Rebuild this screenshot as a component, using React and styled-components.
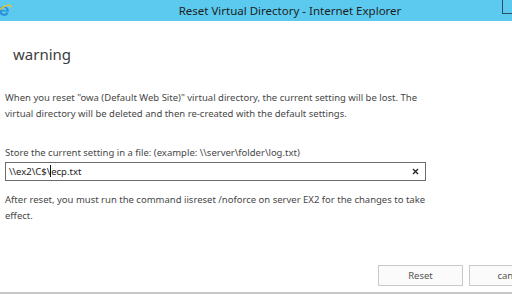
import React from 'react';
import styled, { createGlobalStyle } from 'styled-components';

const GlobalStyle = createGlobalStyle`
  html, body {
    margin: 0;
    padding: 0;
    background: #ffffff;
    overflow: hidden;
  }
`;

const Window = styled.div`
  width: 580px;
  height: 294px;
  display: flex;
  flex-direction: column;
  background: #ffffff;
  font-family: 'Noto Sans', 'Open Sans', sans-serif;
  color: #454545;
  box-sizing: border-box;
  border-bottom: 2px solid #c6c6c6;
`;

const TitleBar = styled.div`
  height: 21px;
  display: flex;
  align-items: center;
  background: #5ccaee;
  flex-shrink: 0;
`;

const AppIcon = styled.svg`
  width: 16px;
  height: 16px;
  margin-left: -4px;
  flex-shrink: 0;
`;

const TitleText = styled.div`
  flex: 1;
  text-align: center;
  font-size: 11.5px;
  color: #1e1e1e;
  padding-left: 66px;
`;

const Controls = styled.div`
  display: flex;
  align-self: flex-start;
  height: 15px;
`;

const ControlButton = styled.div`
  width: 26px;
  height: 14px;
  box-sizing: border-box;
  display: flex;
  align-items: center;
  justify-content: center;
  border-left: ${p => (p.outlined ? '1px solid #2c4f66' : 'none')};
  border-bottom: ${p => (p.outlined ? '1px solid #2c4f66' : 'none')};

  &::after {
    content: '';
    width: 8px;
    height: 2px;
    background: #1b1b1b;
    margin-left: 8px;
  }
`;

const Body = styled.div`
  flex: 1;
  display: flex;
  flex-direction: column;
  padding: 0 5px;
`;

const Heading = styled.h1`
  margin: 23px 0 0 8px;
  font-size: 15px;
  font-weight: 400;
  line-height: 20px;
  color: #3d3d3d;
`;

const Paragraph = styled.p`
  margin: ${p => p.top || 0}px 0 0;
  font-size: 9.5px;
  line-height: 15.5px;
  color: #474747;
`;

const FieldLabel = styled.label`
  margin-top: 25px;
  font-size: 9.5px;
  line-height: 14px;
  color: #474747;
`;

const InputBox = styled.div`
  width: 421px;
  height: 19px;
  margin-top: 2px;
  box-sizing: border-box;
  border: 1px solid #6b6b6b;
  display: flex;
  align-items: center;
  padding: 0 6px 0 3px;
  font-size: 9.5px;
  color: #222;
`;

const InputValue = styled.span`
  flex: 1;
`;

const Caret = styled.span`
  display: inline-block;
  width: 1px;
  height: 12px;
  background: #111;
  vertical-align: -2px;
`;

const ClearIcon = styled.svg`
  width: 7px;
  height: 7px;
`;

const Footer = styled.div`
  margin-top: auto;
  display: flex;
  gap: 6px;
  padding: 0 0 6px 373px;
`;

const Button = styled.button`
  width: 85px;
  height: 21px;
  flex-shrink: 0;
  border: 1px solid #c9c9c9;
  background: #fbfbfb;
  font-family: inherit;
  font-size: 9.5px;
  color: #555;
  padding: 0;
`;

const App = () => {
  return (
    <>
      <GlobalStyle />
      <Window>
        <TitleBar>
          <AppIcon viewBox="0 0 16 16">
            <path
              d="M8 3.2a4.8 4.8 0 1 0 4.6 6.3H10.3a2.6 2.6 0 0 1-4.9-1h7.4A4.8 4.8 0 0 0 8 3.2zm-2.5 4.1a2.5 2.5 0 0 1 5 0z"
              fill="#2a8fd6"
            />
            <path
              d="M1.5 11.5c-1.2-2 3-6.5 8-8.6 4-1.6 6-.8 5 1.6"
              fill="none"
              stroke="#f3c22b"
              strokeWidth="1.3"
            />
          </AppIcon>
          <TitleText>Reset Virtual Directory - Internet Explorer</TitleText>
          <Controls>
            <ControlButton outlined />
            <ControlButton />
            <ControlButton />
          </Controls>
        </TitleBar>
        <Body>
          <Heading>warning</Heading>
          <Paragraph top={26}>
            When you reset "owa (Default Web Site)" virtual directory, the current setting will be lost. The
            <br />
            virtual directory will be deleted and then re-created with the default settings.
          </Paragraph>
          <FieldLabel>Store the current setting in a file: (example: \\server\folder\log.txt)</FieldLabel>
          <InputBox>
            <InputValue>
              \\ex2\C$\<Caret />ecp.txt
            </InputValue>
            <ClearIcon viewBox="0 0 7 7">
              <path d="M1 1l5 5M6 1L1 6" stroke="#222" strokeWidth="1.3" />
            </ClearIcon>
          </InputBox>
          <Paragraph top={11}>
            After reset, you must run the command iisreset /noforce on server EX2 for the changes to take
            <br />
            effect.
          </Paragraph>
          <Footer>
            <Button>Reset</Button>
            <Button>cancel</Button>
          </Footer>
        </Body>
      </Window>
    </>
  );
};

export default App;
